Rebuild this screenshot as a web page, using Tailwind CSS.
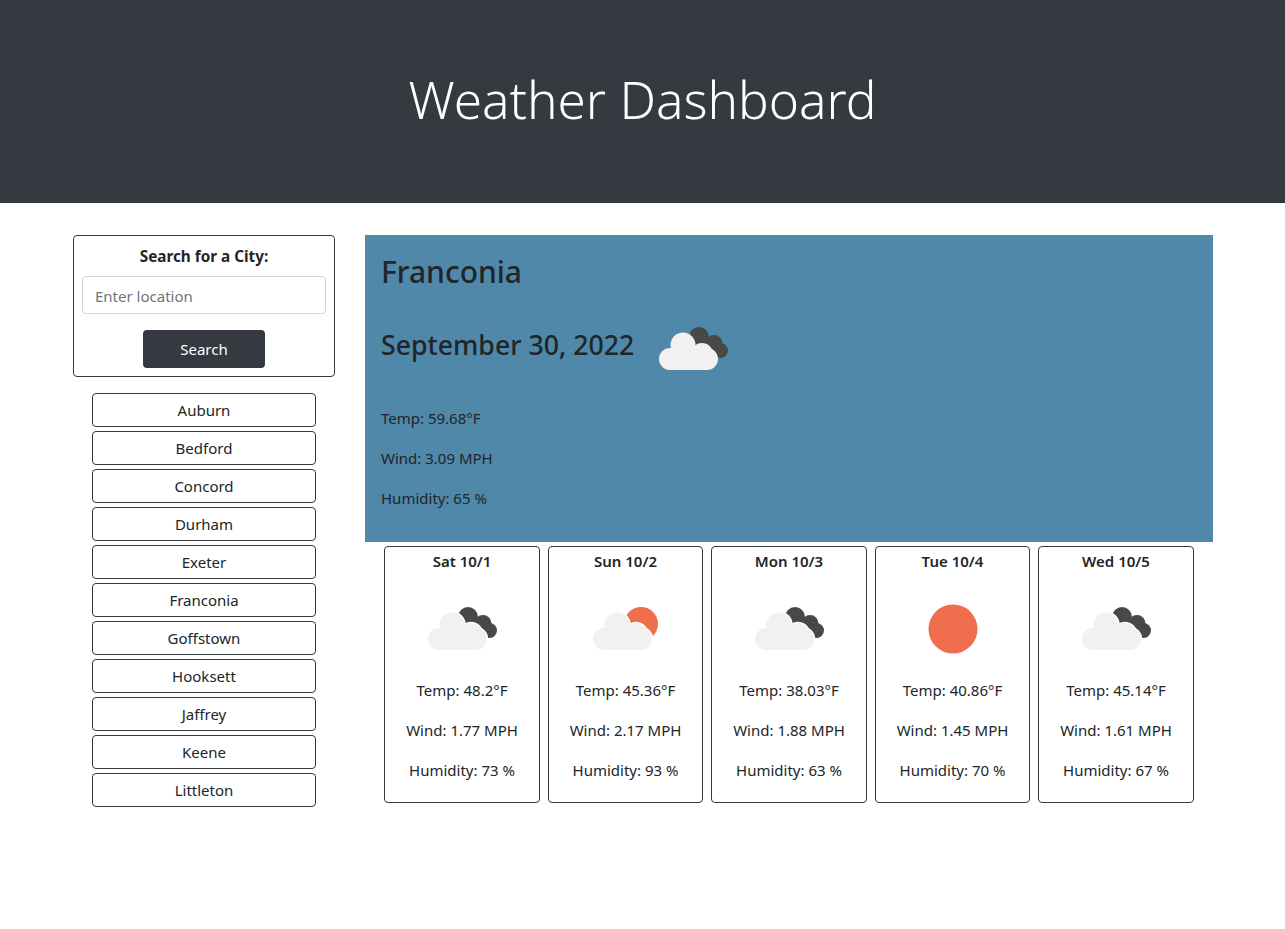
<!DOCTYPE html>
<html lang="en">

<head>
    <meta charset="UTF-8">
    <meta name="viewport" content="width=device-width, initial-scale=1.0">
    <title>Weather Dashboard</title>
    <script src="https://cdn.jsdelivr.net/npm/@tailwindcss/browser@4"></script>
</head>

<body class="bg-white font-['Noto_Sans',sans-serif] text-[#212529] text-[15px] leading-6">
    <svg width="0" height="0" class="absolute">
        <defs>
            <g id="lightCloud">
                <circle cx="24" cy="18" r="12.5" />
                <circle cx="11" cy="32" r="11" />
                <circle cx="43" cy="27" r="11" />
                <circle cx="48" cy="32" r="11" />
                <rect x="11" y="21" width="37" height="22" />
            </g>
            <g id="darkCloud" fill="#484848">
                <circle cx="40" cy="10" r="10" />
                <circle cx="55" cy="16.5" r="8.5" />
                <circle cx="61.5" cy="23.5" r="7.5" />
                <path d="M36 12 L48 12 L56 20 L60 28 L50 34 L30 14 Z" />
            </g>
            <g id="cloudsIcon">
                <use href="#darkCloud" />
                <use href="#lightCloud" fill="#fff" stroke="#fff" stroke-width="2.5" stroke-linejoin="round" />
                <use href="#lightCloud" fill="#f1f1f0" />
            </g>
            <g id="partSunIcon">
                <circle cx="48" cy="17" r="17" fill="#ee6e4d" />
                <use href="#lightCloud" fill="#fff" stroke="#fff" stroke-width="2.5" stroke-linejoin="round" />
                <use href="#lightCloud" fill="#f1f1f0" />
            </g>
        </defs>
    </svg>

    <header class="bg-[#343a40] h-[203px] flex items-center justify-center">
        <h1 class="text-white text-[51.3px] leading-[1.2] font-light -mt-[3px]">Weather Dashboard</h1>
    </header>

    <div class="flex items-start gap-[30px] pl-[73px] pt-8">
        <aside class="w-[262px] shrink-0">
            <form class="border border-[#343a40] rounded h-[142px] px-2 pt-2 flex flex-col items-center">
                <label for="city" class="font-bold text-[15.3px] leading-6">Search for a City:</label>
                <input id="city" type="text" placeholder="Enter location"
                    class="mt-2 w-full h-[38px] pl-3 pr-3 pt-[2px] border border-[#ced4da] rounded placeholder:text-[#6c757d] text-[15px]">
                <button type="button" class="mt-4 w-[122px] h-[38px] bg-[#343a40] text-white rounded">Search</button>
            </form>
            <div class="mt-4 flex flex-col items-center gap-1">
                <button class="w-[224px] h-[34px] border border-[#343a40] rounded">Auburn</button>
                <button class="w-[224px] h-[34px] border border-[#343a40] rounded">Bedford</button>
                <button class="w-[224px] h-[34px] border border-[#343a40] rounded">Concord</button>
                <button class="w-[224px] h-[34px] border border-[#343a40] rounded">Durham</button>
                <button class="w-[224px] h-[34px] border border-[#343a40] rounded">Exeter</button>
                <button class="w-[224px] h-[34px] border border-[#343a40] rounded">Franconia</button>
                <button class="w-[224px] h-[34px] border border-[#343a40] rounded">Goffstown</button>
                <button class="w-[224px] h-[34px] border border-[#343a40] rounded">Hooksett</button>
                <button class="w-[224px] h-[34px] border border-[#343a40] rounded">Jaffrey</button>
                <button class="w-[224px] h-[34px] border border-[#343a40] rounded">Keene</button>
                <button class="w-[224px] h-[34px] border border-[#343a40] rounded">Littleton</button>
            </div>
        </aside>

        <main class="w-[848px] shrink-0">
            <section class="bg-[#4f88a8] h-[307px] pl-4 pt-[18px]">
                <h2 class="text-[30px] leading-[38px] font-medium">Franconia</h2>
                <div class="flex items-start mt-[36px] h-[62px]">
                    <h3 class="text-[26.7px] leading-[34px] font-medium mt-[1px]">September 30, 2022</h3>
                    <svg class="ml-[25px]" width="70" height="44" viewBox="0 0 70 44">
                        <use href="#darkCloud" />
                        <use href="#lightCloud" fill="#f1f1f0" />
                    </svg>
                </div>
                <p class="mt-[17px]">Temp: 59.68°F</p>
                <p class="mt-4">Wind: 3.09 MPH</p>
                <p class="mt-4">Humidity: 65 %</p>
            </section>

            <div class="mt-1 flex gap-2 justify-center">
                <article class="w-[156px] h-[257px] border border-[#343a40] rounded flex flex-col items-center">
                    <h4 class="font-semibold mt-[2px]">Sat 10/1</h4>
                    <svg class="mt-[34px] ml-[2px]" width="70" height="44" viewBox="0 0 70 44"><use href="#cloudsIcon" /></svg>
                    <p class="mt-[27px]">Temp: 48.2°F</p>
                    <p class="mt-4">Wind: 1.77 MPH</p>
                    <p class="mt-4">Humidity: 73 %</p>
                </article>
                <article class="w-[155px] h-[257px] border border-[#343a40] rounded flex flex-col items-center">
                    <h4 class="font-semibold mt-[2px]">Sun 10/2</h4>
                    <svg class="mt-[34px] ml-[4px]" width="70" height="44" viewBox="0 0 70 44"><use href="#partSunIcon" /></svg>
                    <p class="mt-[27px]">Temp: 45.36°F</p>
                    <p class="mt-4">Wind: 2.17 MPH</p>
                    <p class="mt-4">Humidity: 93 %</p>
                </article>
                <article class="w-[156px] h-[257px] border border-[#343a40] rounded flex flex-col items-center">
                    <h4 class="font-semibold mt-[2px]">Mon 10/3</h4>
                    <svg class="mt-[34px] ml-[2px]" width="70" height="44" viewBox="0 0 70 44"><use href="#cloudsIcon" /></svg>
                    <p class="mt-[27px]">Temp: 38.03°F</p>
                    <p class="mt-4">Wind: 1.88 MPH</p>
                    <p class="mt-4">Humidity: 63 %</p>
                </article>
                <article class="w-[155px] h-[257px] border border-[#343a40] rounded flex flex-col items-center">
                    <h4 class="font-semibold mt-[2px]">Tue 10/4</h4>
                    <svg class="mt-[31px] mb-[-4px]" width="50" height="50" viewBox="0 0 50 50"><circle cx="25" cy="25" r="24.5" fill="#ee6e4d" /></svg>
                    <p class="mt-[28px]">Temp: 40.86°F</p>
                    <p class="mt-4">Wind: 1.45 MPH</p>
                    <p class="mt-4">Humidity: 70 %</p>
                </article>
                <article class="w-[156px] h-[257px] border border-[#343a40] rounded flex flex-col items-center">
                    <h4 class="font-semibold mt-[2px]">Wed 10/5</h4>
                    <svg class="mt-[34px] ml-[2px]" width="70" height="44" viewBox="0 0 70 44"><use href="#cloudsIcon" /></svg>
                    <p class="mt-[27px]">Temp: 45.14°F</p>
                    <p class="mt-4">Wind: 1.61 MPH</p>
                    <p class="mt-4">Humidity: 67 %</p>
                </article>
            </div>
        </main>
    </div>
</body>

</html>
